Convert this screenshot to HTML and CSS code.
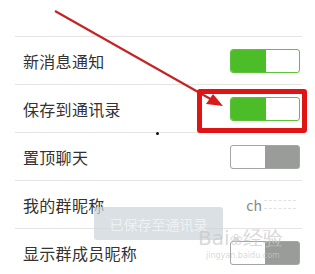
FILE: index.html
```html
<!DOCTYPE html>
<html>
<head>
<meta charset="utf-8">
<link rel="stylesheet" href="styles.css">
</head>
<body>
<div class="screen">
  <div class="list">
    <div class="row"><span class="label">新消息通知</span><span class="toggle on"><i></i></span></div>
    <div class="row"><span class="label">保存到通讯录</span><span class="toggle on"><i></i></span></div>
    <div class="row"><span class="label">置顶聊天</span><span class="toggle off"><i></i></span></div>
    <div class="row"><span class="label">我的群昵称</span><span class="value">ch<span class="blur"></span></span></div>
    <div class="row"><span class="label">显示群成员昵称</span><span class="toggle off"><i></i></span></div>
  </div>
  <svg class="arrow" width="315" height="274" viewBox="0 0 315 274">
    <line x1="55" y1="11" x2="214" y2="101" stroke="#c42424" stroke-width="2.2"/>
    <polygon points="223,106 206,104 213,94" fill="#d41c1c"/>
  </svg>
  <div class="highlight"></div>
  <div class="dot"></div>
  <div class="toast">已保存至通讯录</div>
  <div class="watermark"><span class="wm-big">Bai<span class="paw">❀</span>经验</span><span class="wm-small">jingyan.baidu.com</span></div>
</div>
</body>
</html>
```

FILE: styles.css
```css
html, body {
  margin: 0;
  padding: 0;
  background: #fff;
}
.screen {
  position: relative;
  width: 315px;
  height: 274px;
  overflow: hidden;
  font-family: "Noto Sans CJK SC", "Noto Sans", sans-serif;
}
.list {
  padding-top: 36px;
  margin: 0 13px 0 15px;
}
.row {
  height: 47px;
  border-top: 1px solid #e4e4e4;
  display: flex;
  align-items: center;
  justify-content: space-between;
  padding: 0 2px 0 8px;
}
.label {
  font-size: 16px;
  color: #333;
  letter-spacing: 0.3px;
}
.toggle {
  width: 70px;
  height: 24px;
  box-sizing: border-box;
  border-radius: 3px;
  display: flex;
  overflow: hidden;
}
.toggle i {
  display: block;
  width: 35px;
  height: 100%;
}
.toggle.on {
  background: #fff;
  border: 1px solid #5cc23c;
}
.toggle.on i {
  background: #4cbc28;
}
.toggle.off {
  background: #999c98;
  border: 1px solid #a4a6a3;
}
.toggle.off i {
  background: #fff;
  width: 34px;
}
.value {
  font-size: 14px;
  color: #888;
  display: flex;
  align-items: center;
  margin-right: 4px;
}
.blur {
  display: inline-block;
  width: 32px;
  height: 7px;
  margin-left: 2px;
  border-top: 1px dashed #e2e2e2;
  border-bottom: 1px dashed #e2e2e2;
}
.arrow {
  position: absolute;
  left: 0;
  top: 0;
}
.highlight {
  position: absolute;
  left: 197px;
  top: 89px;
  width: 110px;
  height: 44px;
  box-sizing: border-box;
  border: 5px solid #e01414;
  border-radius: 3px;
}
.dot {
  position: absolute;
  left: 156px;
  top: 132px;
  width: 3px;
  height: 3px;
  background: #111;
  border-radius: 50%;
}
.toast {
  position: absolute;
  left: 94px;
  top: 207px;
  width: 129px;
  height: 33px;
  background: rgba(205, 212, 219, 0.72);
  border-radius: 3px;
  color: #eef1f4;
  font-size: 14px;
  display: flex;
  align-items: center;
  justify-content: center;
}
.watermark {
  position: absolute;
  left: 198px;
  top: 228px;
  display: flex;
  flex-direction: column;
  color: rgba(200, 200, 200, 0.7);
  font-family: "DejaVu Sans", sans-serif;
  line-height: 1;
}
.wm-big {
  font-size: 20px;
}
.paw {
  font-size: 16px;
}
.wm-small {
  font-size: 8px;
  margin-top: 4px;
  margin-left: 8px;
}
```
